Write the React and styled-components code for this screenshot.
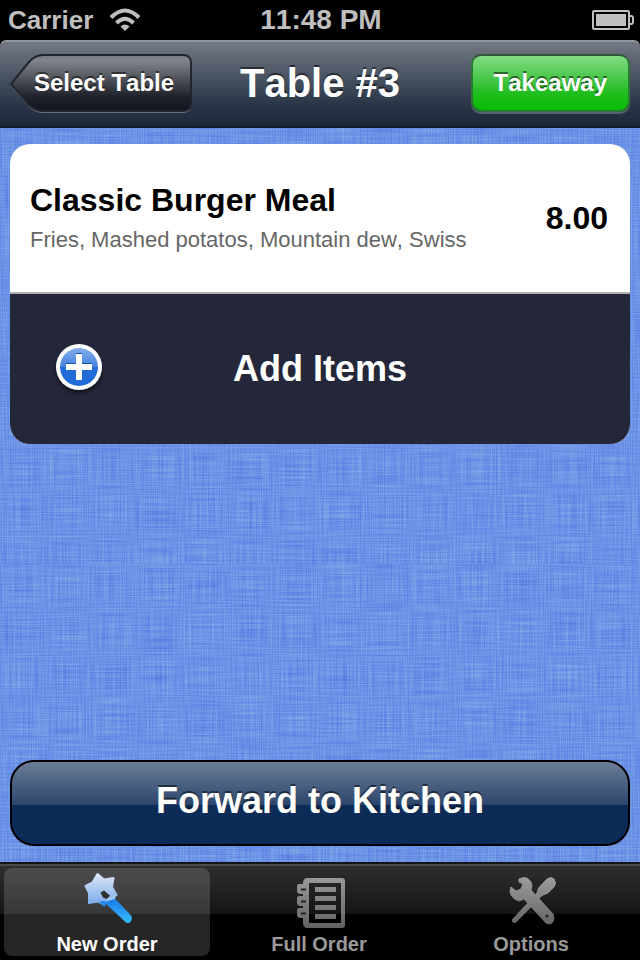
import React from 'react';
import styled, { createGlobalStyle } from 'styled-components';

const linen = `<svg xmlns="http://www.w3.org/2000/svg" width="640" height="436">
  <filter id="f" x="0" y="0" width="100%" height="100%" color-interpolation-filters="sRGB">
    <feTurbulence type="fractalNoise" baseFrequency="0.022 0.83" numOctaves="1" seed="4" result="a"/>
    <feColorMatrix in="a" values="0 0 0 1 0  0 0 0 1 0  0 0 0 1 0  0 0 0 0 1" result="h"/>
    <feTurbulence type="fractalNoise" baseFrequency="0.83 0.022" numOctaves="1" seed="9" result="b"/>
    <feColorMatrix in="b" values="0 0 0 1 0  0 0 0 1 0  0 0 0 1 0  0 0 0 0 1" result="v"/>
    <feComposite in="h" in2="v" operator="arithmetic" k2="0.5" k3="0.5"/>
    <feColorMatrix values="0.36 0 0 0 0.24  0.44 0 0 0 0.355  0.06 0 0 0 0.87  0 0 0 0 1"/>
  </filter>
  <rect width="640" height="436" filter="url(#f)"/>
</svg>`;

const tabs = [
  { label: 'New Order', icon: WandIcon, active: true },
  { label: 'Full Order', icon: NotebookIcon },
  { label: 'Options', icon: ToolsIcon },
];

const App = () => {
  return (
    <Screen>
      <GlobalStyle />
      <StatusBar>
        <Carrier>
          Carrier
          <WifiIcon />
        </Carrier>
        <Clock>11:48 PM</Clock>
        <BatteryIcon />
      </StatusBar>
      <NavBar>
        <BackButton>
          <BackShape />
          <span>Select Table</span>
        </BackButton>
        <Title>Table #3</Title>
        <TakeawayButton>Takeaway</TakeawayButton>
      </NavBar>
      <Content>
        <Card>
          <Item>
            <div>
              <ItemName>Classic Burger Meal</ItemName>
              <ItemDetails>Fries, Mashed potatos, Mountain dew, Swiss</ItemDetails>
            </div>
            <Price>8.00</Price>
          </Item>
          <AddButton>
            <PlusIcon />
            <span>Add Items</span>
          </AddButton>
        </Card>
        <ForwardButton>Forward to Kitchen</ForwardButton>
      </Content>
      <TabBar>
        {tabs.map(({ label, icon: Icon, active }) => (
          <Tab key={label} $active={active}>
            <Icon />
            {label}
          </Tab>
        ))}
      </TabBar>
    </Screen>
  );
};

function WifiIcon() {
  return (
    <svg width="32" height="24" viewBox="0 0 32 24" aria-hidden="true">
      <g fill="none" stroke="#bfbfbf" strokeWidth="4">
        <path d="M2 9.5 Q16 -4.500 30 9.5" />
        <path d="M7.500 15 Q16 6.500 24.500 15" />
      </g>
      <path d="M11.500 18.500 Q16 14.500 20.500 18.500 L16 23 Z" fill="#bfbfbf" />
    </svg>
  );
}

function BatteryIcon() {
  return (
    <Battery width="42" height="20" viewBox="0 0 42 20" aria-hidden="true">
      <rect x="1" y="1" width="36" height="18" rx="1" fill="none" stroke="#bfbfbf" strokeWidth="2" />
      <rect x="4" y="4" width="30" height="12" fill="#bfbfbf" />
      <path d="M38 6 H39 Q41 6 41 8 V12 Q41 14 39 14 H38" fill="none" stroke="#bfbfbf" strokeWidth="2" />
    </Battery>
  );
}

function BackShape() {
  const shape = 'M1 30 L19 8 Q25 1 33 1 H173 Q181 1 181 9 V49 Q181 57 173 57 H33 Q25 57 19 51 Z';
  return (
    <ButtonShape viewBox="0 0 182 60" preserveAspectRatio="none" aria-hidden="true">
      <defs>
        <linearGradient id="back" x1="0" y1="0" x2="0" y2="1">
          <stop offset="0" stopColor="#777982" />
          <stop offset="0.1" stopColor="#82848c" />
          <stop offset="0.5" stopColor="#45474e" />
          <stop offset="0.75" stopColor="#1e212a" />
          <stop offset="1" stopColor="#11151f" />
        </linearGradient>
      </defs>
      <path d={shape} transform="translate(0 2)" fill="#69717d" />
      <path d={shape} fill="url(#back)" stroke="#22252d" strokeWidth="2" />
    </ButtonShape>
  );
}

function PlusIcon() {
  return (
    <Plus width="54" height="58" viewBox="0 0 54 58" aria-hidden="true">
      <defs>
        <linearGradient id="plus" x1="0" y1="0" x2="0" y2="1">
          <stop offset="0" stopColor="#86aeea" />
          <stop offset="0.5" stopColor="#4582de" />
          <stop offset="0.51" stopColor="#226cd9" />
          <stop offset="1" stopColor="#226cd9" />
        </linearGradient>
        <filter id="plusShadow" x="-20%" y="-20%" width="140%" height="150%">
          <feDropShadow dx="0" dy="3" stdDeviation="2" floodOpacity="0.6" />
        </filter>
      </defs>
      <circle cx="27" cy="27" r="23" fill="#fff" filter="url(#plusShadow)" />
      <circle cx="27" cy="27" r="19" fill="url(#plus)" />
      <path d="M24 13 H30 V23 H40 V29 H14 V23 H24 Z" fill="#1554bd" />
      <path d="M24 14 H30 V24 H40 V30 H30 V40 H24 V30 H14 V24 H24 Z" fill="#fff" />
    </Plus>
  );
}

function WandIcon() {
  return (
    <svg width="60" height="60" viewBox="0 0 60 60" aria-hidden="true">
      <defs>
        <linearGradient id="star" x1="0" y1="0" x2="0" y2="1">
          <stop offset="0" stopColor="#dce6f8" />
          <stop offset="1" stopColor="#78aae9" />
        </linearGradient>
        <linearGradient id="stick" x1="0" y1="0" x2="0" y2="1">
          <stop offset="0" stopColor="#1977ea" />
          <stop offset="1" stopColor="#35bcfb" />
        </linearGradient>
      </defs>
      <path
        d="M20.500 4 L27 9.500 L36.500 8 L35 17 L39.500 25 L31 29 L27 35 L21 31.500 L12 33 L12 23 L8.500 16 L15.500 12.500 Z"
        fill="url(#star)"
        stroke="url(#star)"
        strokeWidth="2"
        strokeLinejoin="round"
      />
      <path d="M23.500 22.500 L27 20.500 L33 25.500 L30 29 L26 27.500 Z" fill="#303032" />
      <path d="M22 32 L30 30 L27.500 37 Z" fill="#2087ed" />
      <path d="M27 32 L37.500 28 L54.500 46 Q56 51 52 53 H49.500 Z" fill="url(#stick)" />
      <path d="M27 32 L31 28 L39 24.500 L38 29 L31 31 Z" fill="#9bc5f3" />
    </svg>
  );
}

function NotebookIcon() {
  return (
    <svg width="60" height="60" viewBox="0 0 60 60" aria-hidden="true">
      <defs>
        <linearGradient id="page" gradientUnits="userSpaceOnUse" x1="0" y1="8" x2="0" y2="58">
          <stop offset="0" stopColor="#999" />
          <stop offset="1" stopColor="#626262" />
        </linearGradient>
      </defs>
      <g fill="url(#page)" fillRule="evenodd">
        <path d="M18 8 H53 Q56 8 56 11 V55 Q56 58 53 58 H18 Q15 58 14 54 V12 Q15 8 18 8 Z M20 13 V53 H52 V13 Z" />
        <path d="M26 17 H47 V22 H26 Z M26 26 H47 V31 H26 Z M26 35 H47 V40 H26 Z M26 44 H47 V49 H26 Z" />
        <path d="M14 14 H10 Q8 14 8 16 V22 L10 24 H14 Z M14 26 H10 Q8 26 8 28 V34 L10 36 H14 Z M14 38 H10 Q8 38 8 40 V46 L10 48 H14 Z" />
      </g>
      <path d="M12 19.500 H17 M12 31.500 H17 M12 43.500 H17" stroke="#222" strokeWidth="2" />
    </svg>
  );
}

function ToolsIcon() {
  return (
    <svg width="60" height="60" viewBox="0 0 60 60" aria-hidden="true">
      <defs>
        <linearGradient id="tools" gradientUnits="userSpaceOnUse" x1="0" y1="8" x2="0" y2="54">
          <stop offset="0" stopColor="#9b9b9b" />
          <stop offset="1" stopColor="#666" />
        </linearGradient>
      </defs>
      <g fill="url(#tools)" stroke="url(#tools)" strokeLinejoin="round">
        <path d="M18 9 Q22 7 26 8 Q31 11 31 16 L30 20 L52 44 Q54 50 51 53 Q48 55 45 53 L23 29 L18 31 Q13 30 10 25 Q8 21 10 17 L15 21 L20 19 L22 14 L18 12 Z" />
        <path d="M46 9 Q50 6 53 9 Q56 13 53 17 L47 23 L41 25.500 L15 52 Q12 54 11 50 L36 23 L37.500 18 Z" />
      </g>
      <circle cx="46" cy="46" r="1.500" fill="#222" />
    </svg>
  );
}

const GlobalStyle = createGlobalStyle`
  body {
    margin: 0;
    background: #000;
    font-family: "Liberation Sans", Helvetica, Arial, sans-serif;
    font-kerning: none;
  }

  *, *::before {
    box-sizing: border-box;
  }

  svg {
    display: block;
  }

  button {
    padding: 0;
    border: none;
    background: none;
    color: #fff;
    font-family: inherit;
    font-weight: bold;
    font-kerning: inherit;
    cursor: pointer;
  }
`;

const Screen = styled.div`
  display: flex;
  flex-direction: column;
  min-height: 100vh;
`;

const StatusBar = styled.header`
  display: grid;
  grid-template-columns: 1fr auto 1fr;
  align-items: center;
  height: 40px;
  padding: 0 6px 0 8px;
  background: #000;
  color: #bfbfbf;
  font-weight: bold;
`;

const Carrier = styled.div`
  display: flex;
  align-items: center;
  gap: 16px;
  font-size: 26px;
`;

const Clock = styled.time`
  font-size: 28px;
`;

const Battery = styled.svg`
  justify-self: end;
`;

const NavBar = styled.nav`
  display: grid;
  grid-template-columns: 1fr auto 1fr;
  align-items: start;
  height: 88px;
  padding: 12px 10px 0;
  border-top: 2px solid #8f959c;
  border-bottom: 2px solid #131b28;
  border-radius: 6px 6px 0 0;
  background: linear-gradient(#737984, #505967 35%, #2c384a 72%, #1c273a);
`;

const BackButton = styled.button`
  position: relative;
  justify-self: start;
  height: 60px;
  padding: 0 18px 2px 24px;
  font-size: 24px;
  text-shadow: 0 -2px 0 rgba(0, 0, 0, 0.5);

  span {
    position: relative;
  }
`;

const ButtonShape = styled.svg`
  position: absolute;
  inset: 0;
  width: 100%;
  height: 100%;
`;

const Title = styled.h1`
  margin: 0;
  color: #fff;
  font-size: 40px;
  line-height: 58px;
  text-shadow: 0 -2px 0 rgba(0, 0, 0, 0.5);
`;

const TakeawayButton = styled.button`
  justify-self: end;
  height: 58px;
  padding: 0 21px;
  border: 2px solid #287b32;
  border-top-color: #31583c;
  border-radius: 10px;
  background: linear-gradient(#83dc83, #48c648 42%, #1fbd1d 70%, #08bc05) padding-box;
  box-shadow: 0 2px 0 #56616f;
  font-size: 24px;
  text-shadow: 0 -2px 0 rgba(0, 0, 0, 0.5);
`;

const Content = styled.main`
  display: flex;
  flex: 1;
  flex-direction: column;
  justify-content: space-between;
  gap: 32px;
  padding: 16px 10px;
  background: #6a94e7 url('data:image/svg+xml,${encodeURIComponent(linen).replace(/\(/g, '%28').replace(/\)/g, '%29')}');
`;

const Card = styled.section`
  overflow: hidden;
  border-radius: 20px;
  background: #fff;
`;

const Item = styled.div`
  display: flex;
  align-items: center;
  justify-content: space-between;
  height: 150px;
  padding: 0 22px 0 20px;
  border-bottom: 2px solid #b0b0b0;
`;

const ItemName = styled.h2`
  margin: 0 0 4px;
  font-size: 32px;
  line-height: 40px;
`;

const ItemDetails = styled.p`
  margin: 0;
  color: #666;
  font-size: 22px;
  line-height: 32px;
`;

const Price = styled.strong`
  font-size: 32px;
`;

const AddButton = styled.button`
  display: grid;
  grid-template-columns: 1fr auto 1fr;
  align-items: center;
  width: 100%;
  height: 150px;
  background: #24273a;
  font-size: 36px;
`;

const Plus = styled.svg`
  margin-left: 42px;
`;

const ForwardButton = styled.button`
  height: 86px;
  padding-bottom: 4px;
  border: 2px solid #000;
  border-radius: 24px;
  background: linear-gradient(#6b7d97, #2c466c 52%, #0c2b56 52%, #0c2b56);
  font-size: 36px;
  text-shadow: 0 -2px 0 rgba(0, 0, 0, 0.5);
`;

const TabBar = styled.nav`
  display: grid;
  grid-template-columns: repeat(3, 1fr);
  gap: 6px;
  height: 98px;
  padding: 4px 6px 4px 4px;
  border-top: 2px solid #141516;
  background: linear-gradient(#4b4b4b 2px, #2e2e2e 2px, #151515 50px, #000 50px);
`;

const Tab = styled.button`
  display: flex;
  flex-direction: column;
  align-items: center;
  gap: 2px;
  padding-top: 2px;
  border-radius: 8px;
  background: ${(props) => (props.$active ? 'rgba(255, 255, 255, 0.15)' : 'none')};
  color: ${(props) => (props.$active ? '#fff' : '#999')};
  font-size: 20px;
  line-height: 24px;
`;

export default App;
